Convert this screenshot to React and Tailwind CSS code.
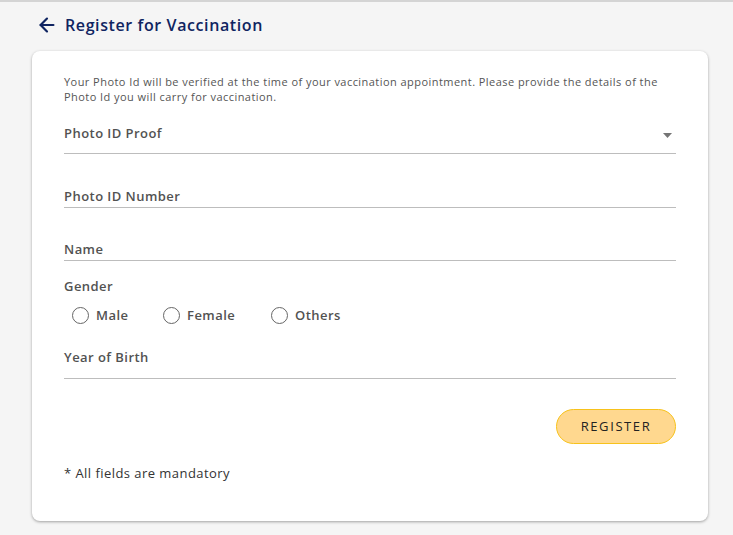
import { ArrowLeft } from 'lucide-react';

const Field = ({ label, arrow, className = '' }) => (
    <div className={`flex items-end justify-between border-b border-[#bdbdbd] ${className}`}>
        <span className="text-[13px] leading-[18px] font-semibold tracking-[0.45px] text-[#525252]">{label}</span>
        {arrow && (
            <svg width="9" height="5" viewBox="0 0 9 5" className="mb-[4px] mr-[4px]">
                <path d="M0 0h9L4.5 5z" fill="#757575" />
            </svg>
        )}
    </div>
);

const Radio = ({ label, className = '' }) => (
    <label className={`flex items-center gap-[7px] ${className}`}>
        <span className="w-[17px] h-[17px] rounded-full border border-[#666]"></span>
        <span className="text-[13px] leading-[18px] font-semibold tracking-[0.45px] text-[#525252]">{label}</span>
    </label>
);

export default function App() {
    return (
        <div
            className="min-h-[535px] bg-[#f5f5f5] border-t-2 border-[#d4d4d4] pl-[32px] pr-[25px] pt-[12px] pb-[14px]"
            style={{ fontFamily: '"Open Sans", sans-serif' }}
        >
            <div className="flex items-center gap-[7px] pl-[4px] h-[22px]">
                <ArrowLeft size={22} strokeWidth={2.4} className="text-[#0f2461]" />
                <h1 className="text-[16px] font-semibold tracking-[0.6px] text-[#0f2461]">Register for Vaccination</h1>
            </div>

            <div className="mt-[15px] bg-white rounded-[8px] shadow-[0_1px_3px_rgba(0,0,0,0.35)] px-[32px] pt-[23px] pb-[39px]">
                <p className="text-[11px] leading-[15px] tracking-[0.45px] text-[#555]">
                    Your Photo Id will be verified at the time of your vaccination appointment. Please provide the details of the
                    Photo Id you will carry for vaccination.
                </p>

                <Field label="Photo ID Proof" arrow className="mt-[20px] pb-[11px]" />
                <Field label="Photo ID Number" className="mt-[33px] pb-[2px]" />
                <Field label="Name" className="mt-[32px] pb-[2px]" />

                <div className="mt-[16px] text-[13px] leading-[18px] font-semibold tracking-[0.45px] text-[#525252]">Gender</div>
                <div className="flex items-center mt-[11px] pl-[8px]">
                    <Radio label="Male" className="w-[91px]" />
                    <Radio label="Female" className="w-[108px]" />
                    <Radio label="Others" />
                </div>

                <Field label="Year of Birth" className="mt-[24px] pb-[12px]" />

                <div className="flex justify-end mt-[30px]">
                    <button className="w-[120px] h-[35px] rounded-full bg-[#ffd88f] border border-[#f7c21b] text-[13px] font-medium tracking-[1.6px] text-[#222]">
                        REGISTER
                    </button>
                </div>

                <p className="mt-[20px] text-[13px] leading-[18px] tracking-[0.45px] text-[#333]">* All fields are mandatory</p>
            </div>
        </div>
    );
}
